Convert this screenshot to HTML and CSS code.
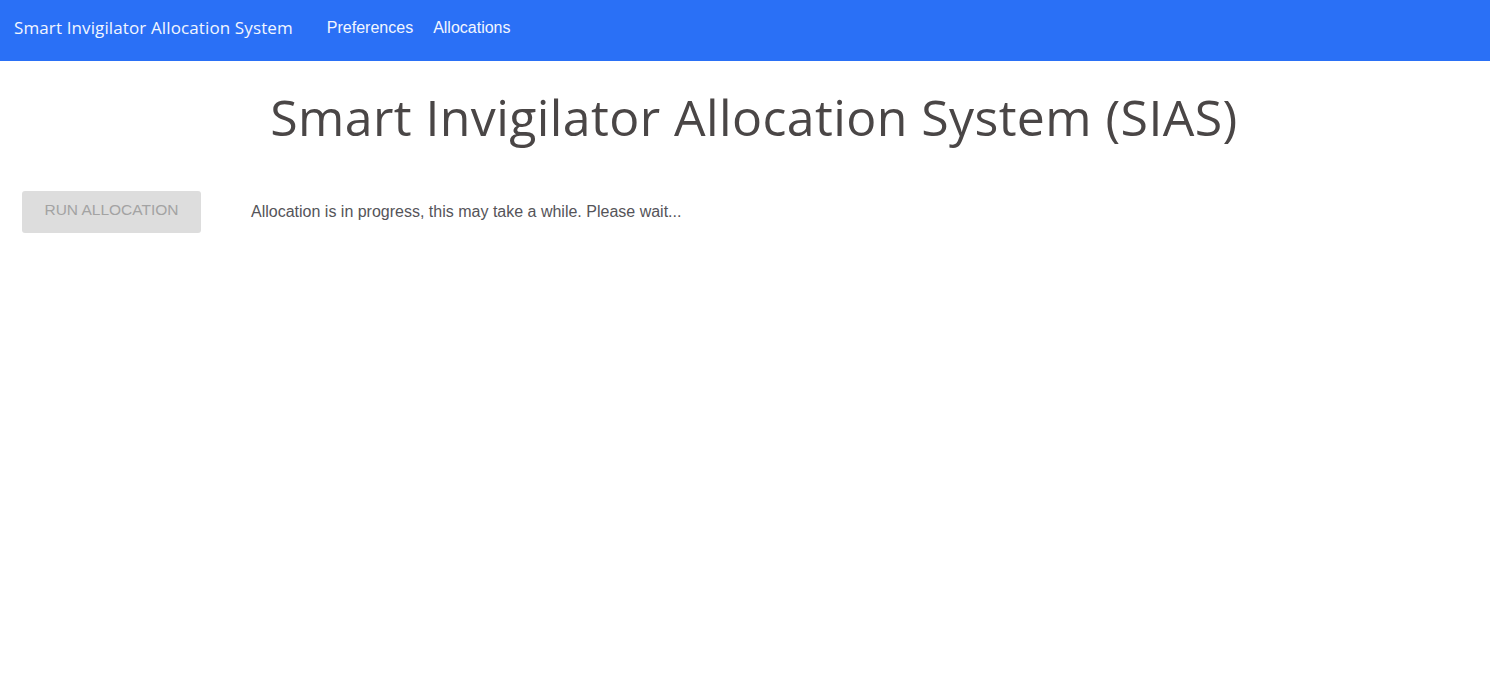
FILE: index.html
```html
<!DOCTYPE html>
<html>
<head>
<meta charset="utf-8">
<link rel="stylesheet" href="styles.css">
</head>
<body>
<nav class="navbar">
  <span class="brand">Smart Invigilator Allocation System</span>
  <div class="nav-links">
    <a class="nav-link" href="#">Preferences</a>
    <a class="nav-link" href="#">Allocations</a>
  </div>
</nav>
<main class="main">
  <h1 class="title">Smart Invigilator Allocation System (SIAS)</h1>
  <div class="run-row">
    <button class="run-btn" disabled>RUN ALLOCATION</button>
    <p class="status">Allocation is in progress, this may take a while. Please wait...</p>
  </div>
</main>
</body>
</html>
```
FILE: styles.css
```css
html, body {
  margin: 0;
  padding: 0;
  background: #ffffff;
  font-family: "Liberation Sans", Arial, sans-serif;
}
.navbar {
  height: 61px;
  background: #2a70f6;
  display: flex;
  align-items: center;
  padding: 0 14px 6px;
  box-sizing: border-box;
}
.brand {
  font-family: "Open Sans", sans-serif;
  font-size: 17px;
  letter-spacing: 0.12px;
  color: #f2f6ff;
  margin-right: 34px;
}
.nav-links {
  display: flex;
  gap: 20px;
}
.nav-link {
  color: #f2f6ff;
  text-decoration: none;
  font-size: 16px;
}
.main {
  padding: 0 22px;
}
.title {
  margin: 25px 0 0;
  text-align: center;
  font-family: "Open Sans", sans-serif;
  font-weight: 400;
  font-size: 50px;
  letter-spacing: 0.4px;
  line-height: 62px;
  color: #4a4646;
  padding-left: 18px;
}
.run-row {
  display: flex;
  align-items: center;
  margin-top: 43px;
}
.run-btn {
  width: 179px;
  height: 42px;
  border: none;
  border-radius: 3px;
  background: #dddddd;
  color: #a3a3a3;
  font-family: "Liberation Sans", Arial, sans-serif;
  font-size: 15.5px;
  padding: 0 0 4px;
  margin-right: 50px;
}
.status {
  margin: 0;
  font-size: 16px;
  color: #555459;
}
```
